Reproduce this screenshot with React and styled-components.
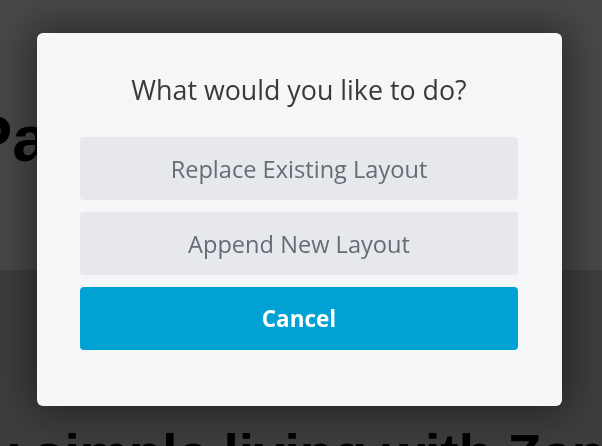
import React from "react";
import styled, { createGlobalStyle } from "styled-components";

const Global = createGlobalStyle`
  html, body { margin: 0; padding: 0; }
  body { background: #fff; font-family: "Open Sans", "Noto Sans", sans-serif; overflow: hidden; }
  * { box-sizing: border-box; }
`;

const Page = styled.div`
  width: 602px;
  height: 446px;
  overflow: hidden;
  display: flex;
  flex-direction: column;
`;

const Hero = styled.section`
  height: 270px;
  background: #fff;
  padding-top: 106px;
  flex: none;
`;

const Lower = styled.section`
  flex: 1;
  background: #d9d9d9;
  padding-top: 157px;
`;

const BigTitle = styled.h1`
  margin: 0 0 0 -31px;
  font-family: "Liberation Sans", Arial, sans-serif;
  font-weight: 700;
  font-size: 65px;
  line-height: 1;
  color: #000;
  white-space: nowrap;
`;

const SubTitle = styled.h2`
  margin: 0 0 0 -12px;
  font-family: "Liberation Sans", Arial, sans-serif;
  font-weight: 700;
  font-size: 55px;
  line-height: 1;
  color: #000;
  white-space: nowrap;
`;

const Overlay = styled.div`
  position: fixed;
  inset: 0;
  background: rgba(0, 0, 0, 0.72);
  display: flex;
  align-items: center;
  justify-content: center;
  padding: 0 3px 7px 0;
`;

const Modal = styled.div`
  width: 525px;
  height: 373px;
  background: #f5f6f8;
  border-radius: 6px;
  box-shadow: 0 0 40px 6px rgba(0, 0, 0, 0.45);
  padding: 38px 44px 56px 43px;
  display: flex;
  flex-direction: column;
`;

const Question = styled.h3`
  margin: 0 0 28px;
  text-align: center;
  font-family: "Open Sans", "Noto Sans", sans-serif;
  font-weight: 400;
  font-size: 26.8px;
  line-height: 38px;
  color: #3a3a3a;
`;

const Actions = styled.div`
  display: flex;
  flex-direction: column;
  gap: 12px;
`;

const Choice = styled.button`
  height: 63px;
  border: none;
  border-radius: 4px;
  background: ${(p) => (p.$primary ? "#00a2d3" : "#e6e8ec")};
  color: ${(p) => (p.$primary ? "#ffffff" : "#666c77")};
  font-family: "Open Sans", "Noto Sans", sans-serif;
  font-weight: ${(p) => (p.$primary ? 700 : 500)};
  font-size: ${(p) => (p.$primary ? "22.5px" : "23.6px")};
  cursor: pointer;
  padding: 0;
`;

export default function App() {
  return (
    <>
      <Global />
      <Page>
        <Hero>
          <BigTitle>Pages and More</BigTitle>
        </Hero>
        <Lower>
          <SubTitle>y simple living with Zen</SubTitle>
        </Lower>
      </Page>
      <Overlay>
        <Modal>
          <Question>What would you like to do?</Question>
          <Actions>
            <Choice>Replace Existing Layout</Choice>
            <Choice>Append New Layout</Choice>
            <Choice $primary>Cancel</Choice>
          </Actions>
        </Modal>
      </Overlay>
    </>
  );
}
